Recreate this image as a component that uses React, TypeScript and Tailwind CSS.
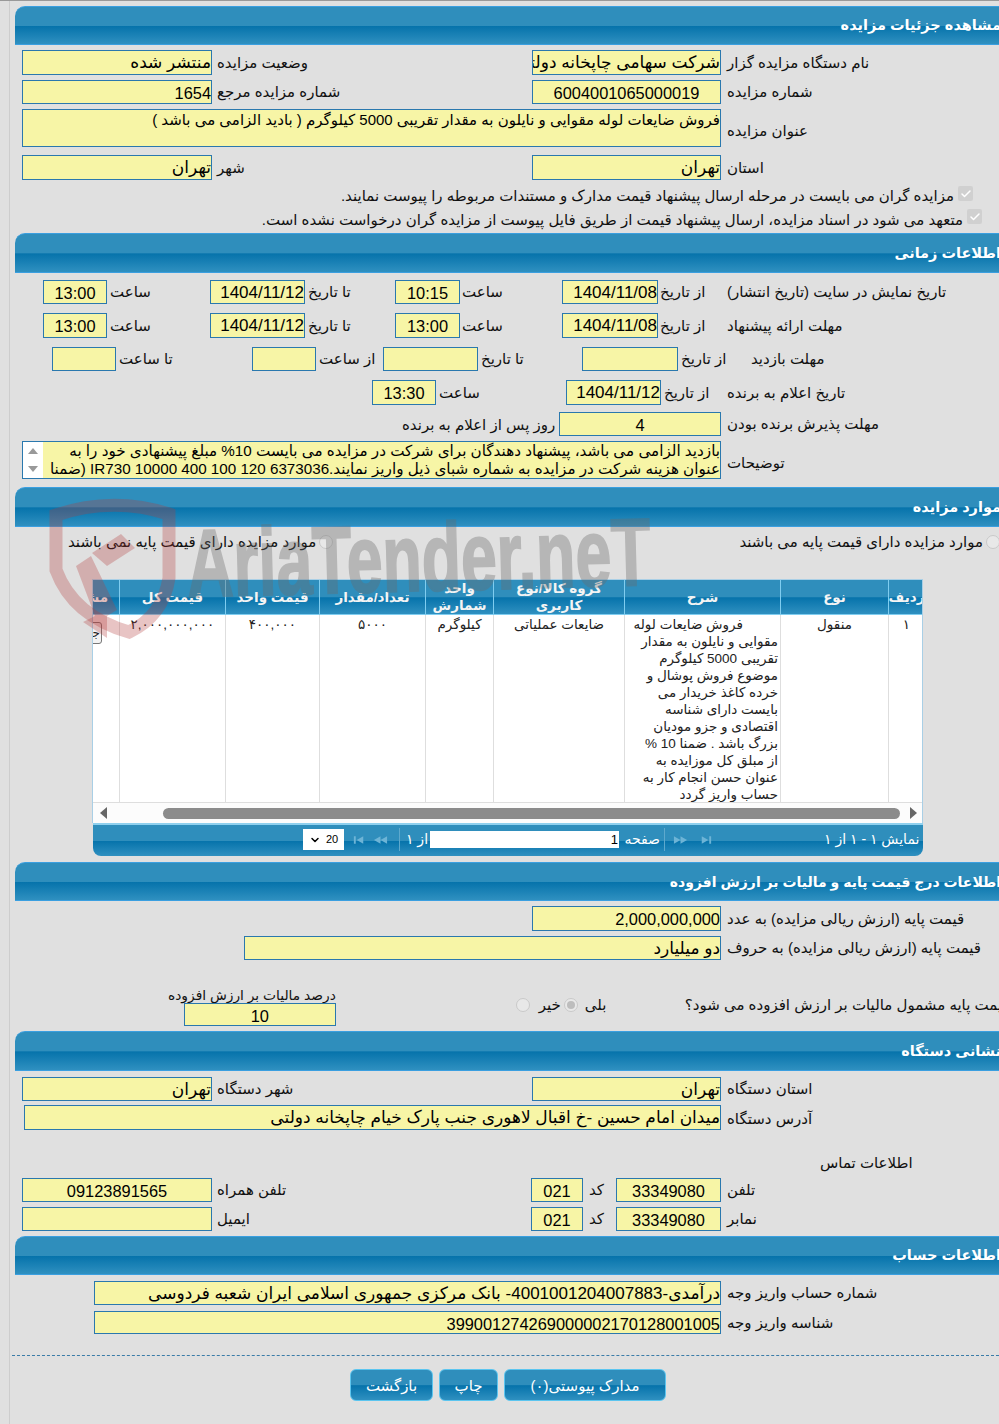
import type { ReactNode } from 'react'
import { Check, ChevronDown } from 'lucide-react'

const barBg =
  'bg-[linear-gradient(#2f8ebc_0%,#2f8ebc_50%,#0673ab_52%,#2f90c0_100%)]'

function Header({ title, className }: { title: ReactNode; className: string }) {
  return (
    <div
      dir="rtl"
      className={`ml-[15px] w-[986px] rounded-tl-[10px] border-y border-[#3a9fe0] ${barBg} flex items-center pt-[1px] text-[14.5px] font-bold text-white whitespace-nowrap ${className}`}
    >
      {title}
    </div>
  )
}

function Box({
  className,
  center,
  fa,
  children,
}: {
  className: string
  center?: boolean
  fa?: boolean
  children?: ReactNode
}) {
  return (
    <div
      dir="rtl"
      className={`shrink-0 overflow-hidden whitespace-nowrap border border-[#2a78ae] bg-[#f7f5a6] leading-[24px] text-black ${fa ? 'text-[17px]' : 'text-[16.4px]'} ${center ? 'text-center' : 'text-right'} ${className}`}
    >
      {children}
    </div>
  )
}

function Lbl({ className, children }: { className?: string; children?: ReactNode }) {
  return (
    <div className={`shrink-0 self-center whitespace-nowrap text-[15px] leading-[20px] text-[#111] ${className ?? ''}`}>
      <span dir="rtl">{children}</span>
    </div>
  )
}

function Radio({ checked, className }: { checked?: boolean; className?: string }) {
  return (
    <span
      className={`flex h-[14px] w-[14px] shrink-0 items-center justify-center rounded-full border border-[#c9c9c9] bg-[#e8e8e8] ${className ?? ''}`}
    >
      {checked && <span className="h-[8px] w-[8px] rounded-full bg-[#bdbdbd]" />}
    </span>
  )
}

function Tick() {
  return (
    <span className="flex h-[15px] w-[15px] shrink-0 items-center justify-center rounded-[2px] bg-[#d0d0d0]">
      <Check className="h-[12px] w-[12px] text-white" strokeWidth={3} />
    </span>
  )
}

const desc = [
  'مقوایی و نایلون به مقدار',
  'تقریبی 5000 کیلوگرم',
  'موضوع فروش پوشال و',
  'خرده کاغذ خریدار می',
  'بایست دارای شناسه',
  'اقتصادی و جزو مودیان',
  'بزرگ باشد . ضمنا 10 %',
  'از مبلق کل موزایده به',
  'عنوان حسن انجام کار به',
  'حساب واریز گردد',
]

const colTemplate =
  'grid grid-cols-[27px_106px_94px_106px_68px_131px_156px_108px_35px]'

function Th({ children }: { children: ReactNode }) {
  return (
    <div
      dir="rtl"
      className="flex items-center justify-center overflow-hidden border-r border-[#7fcdf0] text-center text-[13.5px] leading-[17px] font-bold text-[#f4f4f4] last:border-r-0"
    >
      {children}
    </div>
  )
}

function Td({ children }: { children?: ReactNode }) {
  return (
    <div
      dir="rtl"
      className="overflow-hidden border-r border-[#dedede] pt-[1px] text-center text-[13.5px] leading-[17px] text-[#222] last:border-r-0"
    >
      {children}
    </div>
  )
}

function PagerIcon({ flip, bar }: { flip?: boolean; bar?: boolean }) {
  return (
    <svg
      viewBox="0 0 16 10"
      className={`h-[10px] w-[15px] text-[#6db4d6] ${flip ? 'rotate-180' : ''}`}
      fill="currentColor"
    >
      {bar ? (
        <>
          <rect x="2" y="1" width="2" height="8" />
          <path d="M12 1v8L5 5z" />
        </>
      ) : (
        <path d="M8 1v8L1 5zM15 1v8L8 5z" />
      )}
    </svg>
  )
}

function Table() {
  return (
    <div className="ml-[92px] mt-[28px] w-[831px]">
      <div className="overflow-hidden border-x border-t border-[#a9cfe6]">
        <div className={`${colTemplate} h-[35px] ${barBg} border-b border-[#7fcdf0]`}>
          <Th>
            <span className="block w-full pr-[11px] text-right whitespace-nowrap">مشاهده</span>
          </Th>
          <Th>قیمت کل</Th>
          <Th>قیمت واحد</Th>
          <Th>تعداد/مقدار</Th>
          <Th>
            واحد
            <br />
            شمارش
          </Th>
          <Th>
            گروه کالا/نوع
            <br />
            کاربری
          </Th>
          <Th>شرح</Th>
          <Th>نوع</Th>
          <Th>ردیف</Th>
        </div>
        <div className={`${colTemplate} h-[187px] bg-white`}>
          <Td>
            <div className="mr-[17px] mt-[6px] h-[22px] w-[40px] overflow-hidden rounded-[3px] border border-[#777] bg-[#f3f3f3] pr-[1px] text-right text-[12px] leading-[20px]">
              جزئیات
            </div>
          </Td>
          <Td><span className="tracking-[1.2px]">۲,۰۰۰,۰۰۰,۰۰۰</span></Td>
          <Td><span className="tracking-[1.2px]">۴۰۰,۰۰۰</span></Td>
          <Td><span className="tracking-[1.2px]">۵۰۰۰</span></Td>
          <Td>کیلوگرم</Td>
          <Td>ضایعات عملیاتی</Td>
          <Td>
            <div className="whitespace-nowrap pr-[2px] text-right">
              <div className="pr-[35px]">فروش ضایعات لوله</div>
              {desc.map((line) => (
                <div key={line}>{line}</div>
              ))}
            </div>
          </Td>
          <Td>منقول</Td>
          <Td>۱</Td>
        </div>
        <div className="flex h-[21px] items-center border-t border-[#dedede] bg-[#fcfcfc]">
          <svg viewBox="0 0 8 12" className="ml-[7px] h-[12px] w-[8px] fill-[#666]">
            <path d="M7 0v12L0 6z" />
          </svg>
          <div className="ml-[55px] h-[11px] w-[737px] rounded-full bg-[#8c8c8c]" />
          <svg viewBox="0 0 8 12" className="ml-[9px] h-[12px] w-[8px] fill-[#666]">
            <path d="M1 0v12L8 6z" />
          </svg>
        </div>
      </div>
      <div
        className={`ml-[1px] flex h-[33px] items-center rounded-b-[8px] border-t-[2px] border-[#8fd0ee] pb-[2px] ${barBg} text-[14px] text-white`}
      >
        <div className="ml-[210px] flex h-[21px] w-[41px] items-center justify-center gap-[5px] bg-white text-[11px] font-medium text-black">
          <ChevronDown className="h-[12px] w-[12px]" strokeWidth={3} />
          20
        </div>
        <div className="ml-[8px] flex w-[47px] items-center gap-[6px]">
          <PagerIcon bar />
          <PagerIcon />
        </div>
        <div className="h-[23px] w-[1px] bg-[#5ea9cd]" />
        <div className="ml-[4px] w-[26px] whitespace-nowrap text-center" dir="rtl">از ۱</div>
        <div className="h-[17px] w-[189px] bg-white pr-[1px] text-right text-[13px] leading-[17px] text-black">
          1
        </div>
        <div className="ml-[5px] w-[36px] whitespace-nowrap" dir="rtl">صفحه</div>
        <div className="ml-[4px] h-[23px] w-[1px] bg-[#5ea9cd]" />
        <div className="ml-[8px] flex items-center gap-[10px]">
          <PagerIcon flip />
          <PagerIcon flip bar />
        </div>
        <div className="ml-[111px] whitespace-nowrap" dir="rtl">نمایش ۱ - ۱ از ۱</div>
      </div>
    </div>
  )
}

function Watermark() {
  return (
    <div className="pointer-events-none absolute left-[45px] top-[497px] h-[145px] w-[610px]">
      <svg viewBox="0 0 140 145" className="absolute left-0 top-0 h-[145px] w-[140px]">
        <path
          d="M11 17Q68 -2 124 16L124 80Q118 118 84 134Q28 118 11 72Z"
          fill="none"
          stroke="#b23a3a"
          strokeOpacity="0.3"
          strokeWidth="13"
        />
        <path
          d="M31 68L46 58L72 112L62 118L62 140L38 124L50 118Z"
          fill="#b23a3a"
          fillOpacity="0.3"
        />
        <path d="M47 55L76 36L90 50L62 68Z" fill="#b23a3a" fillOpacity="0.3" />
      </svg>
      <div className="absolute left-[142px] top-[18px] origin-left -rotate-[1.5deg] scale-x-[0.67] whitespace-nowrap font-['Liberation_Sans'] text-[96px] leading-[96px] font-bold text-[#6a6a6a] opacity-35 [-webkit-text-stroke:2px_#6a6a6a]">
        AriaTender.neT
      </div>
    </div>
  )
}

export default function App() {
  return (
    <div className="relative h-[1424px] w-[999px] overflow-hidden border-t border-[#999] bg-[#e0e0e0] bg-[linear-gradient(to_right,#e0e0e0_9px,#cdcdcd_9px,#cdcdcd_10px,#e0e0e0_10px)] pt-[5px] font-['Liberation_Sans','DejaVu_Sans',sans-serif]">
      <Header title="مشاهده جزئیات مزایده" className="h-[39px]" />
      <div className="ml-[22px] mt-[5px] flex h-[25px]">
        <Box className="w-[190px]" fa>منتشر شده</Box>
        <Lbl className="ml-[5px] w-[315px]">وضعیت مزایده</Lbl>
        <Box className="w-[189px]" fa>شرکت سهامی چاپخانه دولتی ایران</Box>
        <Lbl className="ml-[6px]">نام دستگاه مزایده گزار</Lbl>
      </div>
      <div className="ml-[22px] mt-[5px] flex h-[24px]">
        <Box className="w-[190px]">1654</Box>
        <Lbl className="ml-[5px] w-[315px]">شماره مزایده مرجع</Lbl>
        <Box className="w-[189px]" center>6004001065000019</Box>
        <Lbl className="ml-[6px]">شماره مزایده</Lbl>
      </div>
      <div className="ml-[22px] mt-[5px] flex h-[38px] items-center">
        <Box className="h-[38px] w-[699px]">
          <div className="text-[15px] leading-[20px]">
            فروش ضایعات لوله مقوایی و نایلون به مقدار تقریبی 5000 کیلوگرم ( بادید الزامی می باشد )
          </div>
        </Box>
        <Lbl className="ml-[6px] pt-[6px]">عنوان مزایده</Lbl>
      </div>
      <div className="ml-[22px] mt-[8px] flex h-[25px]">
        <Box className="w-[190px]" fa>تهران</Box>
        <Lbl className="ml-[5px] w-[315px]">شهر</Lbl>
        <Box className="w-[189px]" fa>تهران</Box>
        <Lbl className="ml-[6px]">استان</Lbl>
      </div>
      <div dir="rtl" className="mr-[26px] mt-[6px] flex h-[18px] items-start gap-[4px] text-[15px] leading-[20px] text-[#111]">
        <Tick />
        <span>مزایده گران می بایست در مرحله ارسال پیشنهاد قیمت مدارک و مستندات مربوطه را پیوست نمایند.</span>
      </div>
      <div dir="rtl" className="mr-[17px] mt-[5px] flex h-[18px] items-start gap-[4px] text-[15px] leading-[20px] text-[#111]">
        <Tick />
        <span className="mt-[1px]">متعهد می شود در اسناد مزایده، ارسال پیشنهاد قیمت از طریق فایل پیوست از مزایده گران درخواست نشده است.</span>
      </div>

      <Header title="اطلاعات زمانی" className="mt-[6px] h-[40px]" />
      <div className="ml-[43px] mt-[7px] flex h-[24px]">
        <Box className="w-[64px]" center>13:00</Box>
        <Lbl className="ml-[3px] w-[100px]">ساعت</Lbl>
        <Box className="w-[95px]" fa>1404/11/12</Box>
        <Lbl className="ml-[3px] w-[87px]">تا تاریخ</Lbl>
        <Box className="w-[65px]" center>10:15</Box>
        <Lbl className="ml-[2px] w-[100px]">ساعت</Lbl>
        <Box className="w-[96px]" fa>1404/11/08</Box>
        <Lbl className="ml-[2px] w-[67px]">از تاریخ</Lbl>
        <Lbl>تاریخ نمایش در سایت (تاریخ انتشار)</Lbl>
      </div>
      <div className="ml-[43px] mt-[9px] flex h-[25px]">
        <Box className="w-[64px]" center>13:00</Box>
        <Lbl className="ml-[3px] w-[100px]">ساعت</Lbl>
        <Box className="w-[95px]" fa>1404/11/12</Box>
        <Lbl className="ml-[3px] w-[87px]">تا تاریخ</Lbl>
        <Box className="w-[65px]" center>13:00</Box>
        <Lbl className="ml-[2px] w-[100px]">ساعت</Lbl>
        <Box className="w-[96px]" fa>1404/11/08</Box>
        <Lbl className="ml-[2px] w-[67px]">از تاریخ</Lbl>
        <Lbl>مهلت ارائه پیشنهاد</Lbl>
      </div>
      <div className="ml-[52px] mt-[9px] flex h-[24px]">
        <Box className="w-[64px]" />
        <Lbl className="ml-[3px] w-[133px]">تا ساعت</Lbl>
        <Box className="w-[64px]" />
        <Lbl className="ml-[3px] w-[64px]">از ساعت</Lbl>
        <Box className="w-[95px]" />
        <Lbl className="ml-[3px] w-[101px]">تا تاریخ</Lbl>
        <Box className="w-[96px]" />
        <Lbl className="ml-[3px] w-[70px]">از تاریخ</Lbl>
        <Lbl>مهلت بازدید</Lbl>
      </div>
      <div className="ml-[372px] mt-[9px] flex h-[25px]">
        <Box className="w-[64px]" center>13:30</Box>
        <Lbl className="ml-[3px] w-[127px]">ساعت</Lbl>
        <Box className="w-[95px]" fa>1404/11/12</Box>
        <Lbl className="ml-[3px] w-[63px]">از تاریخ</Lbl>
        <Lbl>تاریخ اعلام به برنده</Lbl>
      </div>
      <div className="ml-[402px] mt-[7px] flex h-[24px]">
        <Lbl className="w-[157px] pt-[2px]">روز پس از اعلام به برنده</Lbl>
        <Box className="w-[162px]" center>4</Box>
        <Lbl className="ml-[6px]">مهلت پذیرش برنده بودن</Lbl>
      </div>
      <div className="ml-[22px] mt-[5px] flex h-[38px] items-center">
        <div className="flex h-[38px] w-[699px] border border-[#2a78ae] bg-[#f7f5a6]">
          <div className="flex w-[20px] shrink-0 flex-col items-center justify-between bg-white py-[6px]">
            <span className="h-0 w-0 border-x-[5px] border-b-[6px] border-x-transparent border-b-[#999]" />
            <span className="h-0 w-0 border-x-[5px] border-t-[6px] border-x-transparent border-t-[#999]" />
          </div>
          <div dir="rtl" className="min-w-0 flex-1 overflow-hidden whitespace-nowrap text-right text-[15.2px] leading-[18px] text-black">
            <div>بازدید الزامی می باشد، پیشنهاد دهندگان برای شرکت در مزایده می بایست 10% مبلغ پیشنهادی خود را به</div>
            <div>عنوان هزینه شرکت در مزایده به شماره شبای ذیل واریز نمایند.IR730 10000 400 100 120 6373036 (ضمنا</div>
          </div>
        </div>
        <Lbl className="ml-[6px] pt-[6px]">توضیحات</Lbl>
      </div>

      <Header title="موارد مزایده" className="mt-[8px] h-[40px]" />
      <div className="mt-[6px] flex h-[18px] items-center text-[15px] text-[#111]">
        <span dir="rtl" className="ml-[68px] w-[250px] whitespace-nowrap">موارد مزایده دارای قیمت پایه نمی باشند</span>
        <Radio className="ml-[3px]" />
        <span dir="rtl" className="ml-[406px] w-[244px] whitespace-nowrap text-right">موارد مزایده دارای قیمت پایه می باشند</span>
        <Radio className="ml-[3px]" />
      </div>
      <Table />

      <Header
        title={<span className="text-[14px]">اطلاعات درج قیمت پایه و مالیات بر ارزش افزوده</span>}
        className="mt-[6px] h-[39px]"
      />
      <div className="ml-[532px] mt-[5px] flex h-[25px]">
        <Box className="w-[189px]">2,000,000,000</Box>
        <Lbl className="ml-[6px]">قیمت پایه (ارزش ریالی مزایده) به عدد</Lbl>
      </div>
      <div className="ml-[244px] mt-[5px] flex h-[24px]">
        <Box className="w-[477px]" fa>دو میلیارد</Box>
        <Lbl className="ml-[6px]">قیمت پایه (ارزش ریالی مزایده) به حروف</Lbl>
      </div>
      <div className="ml-[168px] mt-[25px] flex h-[41px] items-end">
        <div className="flex w-[168px] flex-col items-end">
          <Lbl className="h-[18px] self-end leading-[18px]">
            <span className="text-[13.8px]">درصد مالیات بر ارزش افزوده</span>
          </Lbl>
          <Box className="h-[23px] w-[152px] leading-[22px]" center>10</Box>
        </div>
        <div className="mb-[10px] ml-[180px] flex items-center text-[15px] text-[#111]">
          <Radio />
          <span className="ml-[9px] w-[25px] whitespace-nowrap">خیر</span>
          <Radio checked />
          <span className="ml-[7px] w-[100px] whitespace-nowrap text-left">بلی</span>
          <span dir="rtl" className="whitespace-nowrap">قیمت پایه مشمول مالیات بر ارزش افزوده می شود؟</span>
        </div>
      </div>

      <Header title="نشانی دستگاه" className="mt-[5px] h-[40px]" />
      <div className="ml-[22px] mt-[6px] flex h-[24px]">
        <Box className="w-[190px]" fa>تهران</Box>
        <Lbl className="ml-[5px] w-[315px]">شهر دستگاه</Lbl>
        <Box className="w-[189px]" fa>تهران</Box>
        <Lbl className="ml-[6px]">استان دستگاه</Lbl>
      </div>
      <div className="ml-[24px] mt-[4px] flex h-[25px]">
        <Box className="w-[697px]" fa>میدان امام حسین -خ اقبال لاهوری جنب پارک خیام چاپخانه دولتی</Box>
        <Lbl className="ml-[6px] pt-[3px]">آدرس دستگاه</Lbl>
      </div>
      <div className="ml-[820px] mt-[24px] flex h-[18px]">
        <Lbl>اطلاعات تماس</Lbl>
      </div>
      <div className="ml-[22px] mt-[6px] flex h-[24px]">
        <Box className="w-[190px]" center>09123891565</Box>
        <Lbl className="ml-[5px] w-[314px]">تلفن همراه</Lbl>
        <Box className="w-[52px]" center>021</Box>
        <Lbl className="ml-[6px] w-[27px]">کد</Lbl>
        <Box className="w-[105px]" center>33349080</Box>
        <Lbl className="ml-[6px]">تلفن</Lbl>
      </div>
      <div className="ml-[22px] mt-[5px] flex h-[24px]">
        <Box className="w-[190px]" />
        <Lbl className="ml-[5px] w-[314px]">ایمیل</Lbl>
        <Box className="w-[52px]" center>021</Box>
        <Lbl className="ml-[6px] w-[27px]">کد</Lbl>
        <Box className="w-[105px]" center>33349080</Box>
        <Lbl className="ml-[6px]">نمابر</Lbl>
      </div>

      <Header title="اطلاعات حساب" className="mt-[5px] h-[39px]" />
      <div className="ml-[94px] mt-[6px] flex h-[24px]">
        <Box className="w-[627px]" fa>درآمدی-4001001204007883- بانک مرکزی جمهوری اسلامی ایران شعبه فردوسی</Box>
        <Lbl className="ml-[6px]">شماره حساب واریز وجه</Lbl>
      </div>
      <div className="ml-[94px] mt-[6px] flex h-[23px]">
        <Box className="w-[627px] leading-[22px]">399001274269000002170128001005</Box>
        <Lbl className="ml-[6px]">شناسه واریز وجه</Lbl>
      </div>
      <div className="ml-[12px] mt-[21px] border-t border-dashed border-[#3a7ca8]" />
      <div className="ml-[350px] mt-[13px] flex h-[32px] gap-[6px] text-[15px] text-white" dir="ltr">
        <button className={`w-[83px] rounded-[6px] border border-[#5cc5ef] pt-[3px] ${barBg}`}>بازگشت</button>
        <button className={`w-[59px] rounded-[6px] border border-[#5cc5ef] pt-[3px] ${barBg}`}>چاپ</button>
        <button className={`w-[162px] rounded-[6px] border border-[#5cc5ef] pt-[3px] ${barBg}`} dir="rtl">مدارک پیوستی(۰)</button>
      </div>
      <Watermark />
    </div>
  )
}
